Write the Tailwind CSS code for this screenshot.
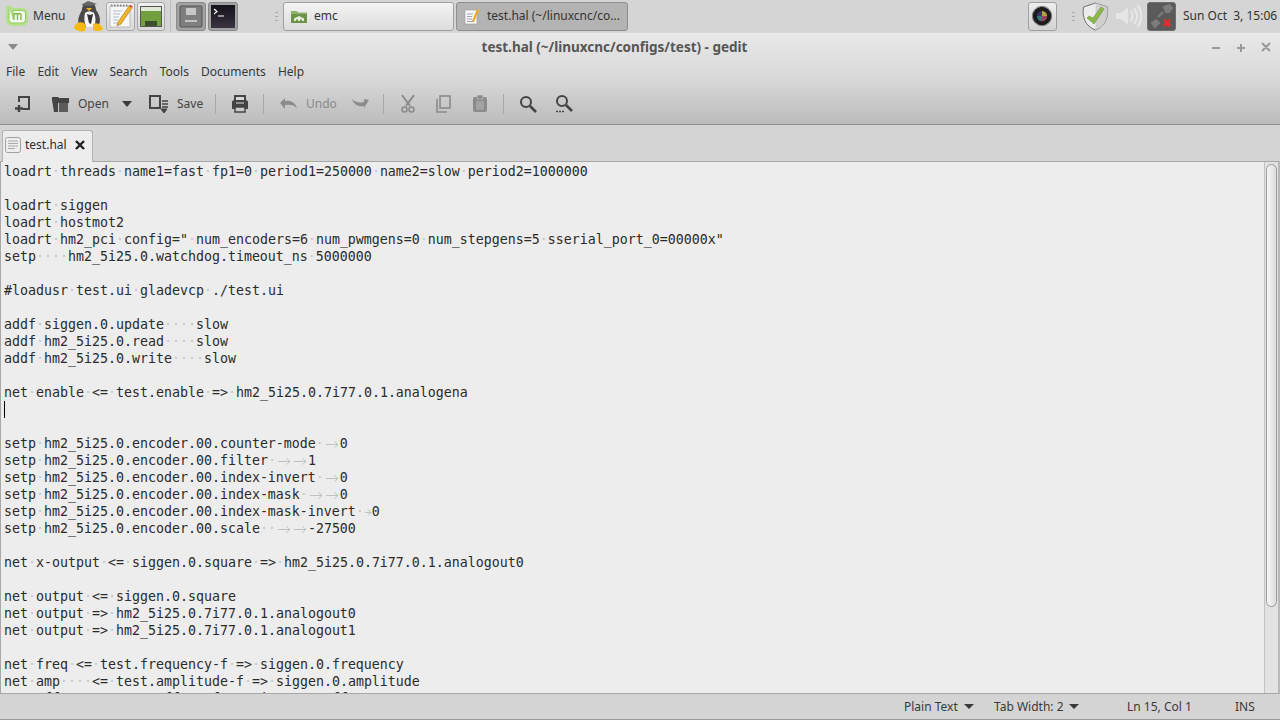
<!DOCTYPE html>
<html lang="en">
<head>
<meta charset="UTF-8">
<title>test.hal - gedit</title>
<script src="https://cdn.jsdelivr.net/npm/@tailwindcss/browser@4"></script>
</head>
<body class="w-[1280px] h-[720px] overflow-hidden bg-[#d4d4d4] font-['Noto_Sans',sans-serif] text-[12px] text-[#3a3a3a]">
<div class="flex flex-col h-[720px]">

  <!-- panel -->
  <div class="h-[34px] shrink-0 flex items-center bg-[#d5d5d5] border-b border-[#ececec] pb-px">
    <svg class="ml-[6px] w-[22px] h-[22px]" viewBox="0 0 22 22">
      <path d="M0 1h6v2h10c3 0 6 2 6 6v6c0 4-3 6-6 6H7c-4 0-7-3-7-7z" fill="#b4e08c"/>
      <path d="M3 3.500v11c0 2 2 3.500 4 3.500h9c2 0 3.500-1.500 3.500-3.500V9c0-2-1.500-3.500-3.500-3.500H7V14" fill="#f3f8ec" stroke="#93cd5e" stroke-width="1"/>
      <path d="M8 8v7M11.500 15V9.500M15 15V9.500M8 10c1-2 3-2 3.500 0 .5-2 3.500-2 3.500 0" fill="none" stroke="#7fb64a" stroke-width="1.300"/>
    </svg>
    <span class="ml-[5px] w-[41px] text-[#333]">Menu</span>
    <svg class="w-[30px] h-[32px]" viewBox="0 0 30 32">
      <path d="M6 27C2 20 6 14 8 10c0-5 3-8 7-8s7 3 7 8c3 4 6 10 2 17z" fill="#4a4a4a"/>
      <path d="M11 13c2-2 7-2 9 0 2 4 2 9 0 14h-8c-2-5-2-10-1-14z" fill="#f4f4f4"/>
      <path d="M13 14l3 1 3-1-2 10-2-1z" fill="#333"/>
      <path d="M7 5l7-4 9 3-7 2z" fill="#666"/>
      <path d="M12 8l6 0-3 3z" fill="#f2b01e"/>
      <path d="M0 28c1-5 6-7 10-5 2 2 2 5 1 8-3 1-9 0-11-3zM19 24c4-2 8 0 10 5-1 2-7 3-10 1z" fill="#f6b90f"/>
    </svg>
    <div class="ml-[2px] w-[29px] h-[29px] rounded-[3px] border border-[#a8a8a8] bg-gradient-to-b from-[#f2f2f2] to-[#d8d8d8] flex items-center justify-center">
      <svg class="w-[26px] h-[27px]" viewBox="0 0 26 27">
        <rect x="2" y="3" width="20" height="21" fill="#f8f8f8" stroke="#bbb"/>
        <path d="M3 2.500h18" stroke="#888" stroke-dasharray="1.500 1.500" stroke-width="2"/>
        <path d="M5 8h9M5 11h7M5 14h6M5 17h5M5 20h8" stroke="#b0bccb"/>
        <path d="M9 23l1-4L21 3l3 2-11 16z" fill="#f0b429" stroke="#a8741a" stroke-width=".6"/>
        <path d="M21 3l1-1.500 3 2-1 1.500z" fill="#d9534f"/>
      </svg>
    </div>
    <div class="ml-[2px] w-[28px] h-[29px] rounded-[3px] border border-[#a8a8a8] bg-gradient-to-b from-[#f0f0f0] to-[#d8d8d8] flex items-center justify-center">
      <svg class="w-[22px] h-[21px]" viewBox="0 0 22 21">
        <rect x=".5" y=".5" width="21" height="20" fill="#6f9a48" stroke="#555"/>
        <rect x="1" y="1" width="20" height="4" fill="#dfe8d4"/>
        <rect x="1" y="5" width="20" height="15" fill="#72a03f"/>
        <rect x="5" y="15" width="12" height="5" fill="#3c4f2c"/>
      </svg>
    </div>
    <div class="ml-[5px] w-px h-[30px] bg-[#bdbdbd]"></div>
    <div class="ml-[5px] w-[30px] h-[29px] rounded-[3px] border border-[#8a8a8a] bg-[#a2a2a2] flex items-center justify-center">
      <svg class="w-[24px] h-[23px]" viewBox="0 0 24 23">
        <rect x="1" y="1" width="22" height="21" rx="1" fill="#7f7f7f" stroke="#555"/>
        <rect x="7" y="3" width="10" height="7" fill="#c8c8c8"/>
        <rect x="6" y="15" width="12" height="2" fill="#c4c4c4"/>
      </svg>
    </div>
    <div class="ml-[2px] w-[30px] h-[29px] rounded-[3px] border border-[#8a8a8a] bg-[#a2a2a2] flex items-center justify-center">
      <div class="w-[24px] h-[23px] bg-gradient-to-b from-[#15121a] to-[#3a3540] flex items-start">
        <svg class="w-[12px] h-[10px] mt-[3px] ml-[2px]" viewBox="0 0 12 10"><path d="M1 1l3 2.500-3 2.500M5 8h6" fill="none" stroke="#fff" stroke-width="1.200"/></svg>
      </div>
    </div>
    <div class="ml-[37px] w-[3px] h-[9px] border-y border-[#aaa] bg-[linear-gradient(#aaa,#aaa)] bg-[length:100%_1px] bg-center bg-no-repeat"></div>
    <div class="ml-[5px] w-[171px] h-[29px] rounded-[3px] border border-[#a0a0a0] bg-gradient-to-b from-[#f4f4f4] to-[#dcdcdc] flex items-center pl-[7px] text-[#333]">
      <svg class="w-[16px] h-[14px]" viewBox="0 0 16 14">
        <path d="M0 2h6l1 1.500h9V14H0z" fill="#8fb26b"/>
        <rect y="5" width="16" height="9" fill="#6d944a"/>
        <path d="M3 12V9.500L8 7l5 2.500V12h-2v-1.500H9V12H7v-1.500H5V12z" fill="#e6efdb"/>
      </svg>
      <span class="ml-[7px]">emc</span>
    </div>
    <div class="ml-[2px] w-[172px] h-[29px] rounded-[3px] border border-[#8e8e8e] bg-[#b3b3b3] flex items-center pl-[7px] text-[#333]">
      <svg class="w-[16px] h-[17px]" viewBox="0 0 16 17">
        <rect x="1" y="2" width="12" height="14" fill="#f7f7f7" stroke="#999" stroke-width=".6"/>
        <path d="M3 6h6M3 8.500h5M3 11h5M3 13.500h7" stroke="#98a6b8"/>
        <path d="M8 13l5-12 2 1-5 12z" fill="#eeaa22"/>
      </svg>
      <span class="ml-[7px]">test.hal (~/linuxcnc/co...</span>
    </div>
    <svg class="ml-[400px] w-[29px] h-[29px] rounded-[3px] border border-[#a0a0a0] bg-gradient-to-b from-[#eeeeee] to-[#d2d2d2]" viewBox="0 0 29 29">
      <circle cx="14" cy="14" r="10" fill="#1c1c1c"/>
      <circle cx="14" cy="14" r="10.500" fill="none" stroke="#777"/>
      <circle cx="14" cy="14" r="5.500" fill="#3c3470"/>
      <path d="M14 8.500a5.500 5.500 0 0 1 5.500 5.500H14z" fill="#b8a034"/>
      <path d="M14 14h5.500a5.500 5.500 0 0 1-5.500 5.500z" fill="#a83c5c"/>
      <path d="M14 14v5.500A5.500 5.500 0 0 1 8.500 14z" fill="#2f7d7a"/>
    </svg>
    <div class="ml-[15px] w-[3px] h-[9px] border-y border-[#aaa] bg-[linear-gradient(#aaa,#aaa)] bg-[length:100%_1px] bg-center bg-no-repeat"></div>
    <svg class="ml-[7px] w-[27px] h-[29px]" viewBox="0 0 27 29">
      <path d="M13.500 1l12 4c1 10-2 19-12 23C3 24 0 15 1.500 5z" fill="#ececec" stroke="#6f6f6f"/>
      <path d="M13.500 1l12 4c1 10-2 19-12 23z" fill="#cfcfcf"/>
      <path d="M7 14l4 2 8-11 3 2-10 15-7-6z" fill="#8db84a" stroke="#66862f" stroke-width=".5"/>
    </svg>
    <svg class="ml-[6px] w-[27px] h-[24px]" viewBox="0 0 27 24">
      <path d="M1 9h5l7-6v18l-7-6H1z" fill="#e6e6e6"/>
      <path d="M16 7c2 3 2 7 0 10M19 4c4 5 4 11 0 16M22.500 1c5 7 5 15 0 22" fill="none" stroke="#e6e6e6" stroke-width="2.200"/>
    </svg>
    <div class="ml-[5px] w-[29px] h-[29px] rounded-[3px] bg-[#5a5a5a] border border-[#6e6e6e] flex items-center justify-center">
      <svg class="w-[25px] h-[25px]" viewBox="0 0 25 25">
        <path d="M3 19l4-3 3 3-4 4zM9 13l5-5M15 3l5-2 3 3-3 4-3 0z" stroke="#7d7d7d" stroke-width="2" fill="#7d7d7d"/>
        <path d="M14 16l2-1 2 2 2-2 2 1-2 2.500 2 2.500-2 2-2-2-2 2-2-2 2-2.500z" fill="#e32c2c"/>
      </svg>
    </div>
    <span class="ml-[7px] whitespace-pre text-[#333]">Sun Oct  3, 15:06</span>
  </div>

  <!-- gradient header: title, menu, toolbar -->
  <div class="h-[91px] shrink-0 flex flex-col bg-gradient-to-b from-[#e8e8e8] via-[#d8d8d8] to-[#bcbcbc] border-b border-[#8e8e8e]">
    <div class="h-[26px] shrink-0 relative flex items-center justify-center pr-[51px] font-bold text-[13.500px] text-[#565656]">
      <svg class="absolute left-[8px] top-[10px] w-[10px] h-[6px]" viewBox="0 0 10 6"><path d="M0 0h10L5 6z" fill="#8a8a8a"/></svg>
      test.hal (~/linuxcnc/configs/test) - gedit
      <svg class="absolute left-[1211px] top-[8px] w-[60px] h-[11px]" viewBox="0 0 60 11" fill="none" stroke="#999" stroke-width="2">
        <path d="M1 6h8M26 6h8M30 2v8M51 1l8 8M59 1l-8 8"/>
      </svg>
    </div>
    <div class="h-[23px] shrink-0 flex items-center pl-[6px] gap-[12.200px] text-[#383838]">
      <span>File</span><span>Edit</span><span>View</span><span>Search</span><span>Tools</span><span>Documents</span><span>Help</span>
    </div>
    <div class="flex-1 flex items-center text-[#444]">
      <svg class="ml-[14px] w-[18px] h-[18px]" viewBox="0 0 18 18" fill="none" stroke="#444" stroke-width="2">
        <path d="M5 7V2h10v12H9"/><path d="M5 10v7M1 13.500h8" stroke-width="2.400"/>
      </svg>
      <svg class="ml-[19px] w-[19px] h-[18px]" viewBox="0 0 19 18">
        <path d="M1 2h6l1 1h10v3H1z" fill="#444"/><path d="M1 5h17v3H7v9H3z" fill="#444"/><rect x="8" y="8" width="9" height="9" fill="#5b5b5b"/>
      </svg>
      <span class="ml-[8px] w-[44px]">Open</span>
      <svg class="w-[10px] h-[6px]" viewBox="0 0 10 6"><path d="M0 0h10L5 6z" fill="#3c3c3c"/></svg>
      <svg class="ml-[17px] w-[20px] h-[18px]" viewBox="0 0 20 18" fill="none" stroke="#444">
        <rect x="1" y="1" width="10" height="12" stroke-width="2"/><path d="M13 6h6M13 9h6M13 12h6" stroke-width="1.500"/><path d="M12 14h6l-3 4z" fill="#444"/>
      </svg>
      <span class="ml-[8px] w-[38px]">Save</span>
      <div class="w-px h-[20px] bg-[#a8a8a8]"></div>
      <svg class="ml-[15px] w-[18px] h-[18px]" viewBox="0 0 18 18">
        <rect x="4" y="1" width="10" height="5" fill="#d8d8d8" stroke="#444" stroke-width="2"/><path d="M1 7c0-1 1-2 2-2h12c1 0 2 1 2 2v7H1z" fill="#444"/><rect x="4" y="12" width="10" height="5" fill="#ccc" stroke="#444" stroke-width="1.500"/><path d="M5 8h8" stroke="#ddd"/>
      </svg>
      <div class="ml-[14px] w-px h-[20px] bg-[#a8a8a8]"></div>
      <svg class="ml-[16px] w-[17px] h-[11px]" viewBox="0 0 17 11"><path d="M0 5l5-5v3c5-1 10 1 12 7-3-3-7-4-12-3v4z" fill="#8c8c8c"/></svg>
      <span class="ml-[9px] w-[46px] text-[#8a8a8a]">Undo</span>
      <svg class="w-[17px] h-[11px]" viewBox="0 0 17 11"><path d="M17 2l-5 8V8C7 9 2 7 0 1c3 3 7 4 12 3V1z" fill="#8c8c8c"/></svg>
      <div class="ml-[14px] w-px h-[20px] bg-[#a8a8a8]"></div>
      <svg class="ml-[17px] w-[14px] h-[18px]" viewBox="0 0 14 18" fill="none" stroke="#8a8a8a">
        <path d="M1 0l8 11M13 0L5 11" stroke-width="2"/><circle cx="3.500" cy="14.500" r="2.500" stroke-width="1.600"/><circle cx="10.500" cy="14.500" r="2.500" stroke-width="1.600"/>
      </svg>
      <svg class="ml-[20px] w-[16px] h-[18px]" viewBox="0 0 16 18" fill="none" stroke="#8a8a8a" stroke-width="1.600">
        <rect x="5" y="1" width="10" height="12"/><path d="M2 4v13h10"/>
      </svg>
      <svg class="ml-[21px] w-[16px] h-[19px]" viewBox="0 0 16 19"><rect x="1" y="3" width="14" height="15" rx="2" fill="#8a8a8a"/><rect x="5" y="1" width="6" height="4" rx="1" fill="#8a8a8a" stroke="#d0d0d0" stroke-width=".6"/><rect x="4" y="7" width="8" height="9" fill="#a2a2a2"/></svg>
      <div class="ml-[15px] w-px h-[20px] bg-[#a8a8a8]"></div>
      <svg class="ml-[15px] w-[18px] h-[18px]" viewBox="0 0 18 18" fill="none" stroke="#444">
        <circle cx="7" cy="7" r="5" stroke-width="2"/><path d="M11 11l6 6" stroke-width="2.600"/>
      </svg>
      <svg class="ml-[18px] w-[18px] h-[19px]" viewBox="0 0 18 19" fill="none" stroke="#444">
        <circle cx="7" cy="7" r="5" stroke-width="2"/><path d="M11 11l6 6" stroke-width="2.600"/><path d="M1 17.500h9" stroke-width="1.500" stroke-dasharray="2 1"/>
      </svg>
    </div>
  </div>

  <!-- tab strip -->
  <div class="h-[36px] shrink-0 flex items-end pl-[2px] bg-[#d4d4d4]">
    <div class="w-[91px] h-[32px] -mb-px rounded-t-[3px] border border-b-0 border-[#b4b4b4] bg-[#ededed] flex items-center pl-[2px] pb-[4px] text-[#2e2e2e] relative z-10">
      <svg class="w-[16px] h-[16px]" viewBox="0 0 16 16" fill="none">
        <rect x=".5" y=".5" width="15" height="15" rx="2" fill="#eeeeee" stroke="#a0a0a0"/><path d="M3 4h10M3 6.500h10M3 9h10M3 11.500h7" stroke="#a8a8a8"/>
      </svg>
      <span class="ml-[4px] w-[50px]">test.hal</span>
      <svg class="w-[10px] h-[10px]" viewBox="0 0 10 10"><path d="M1 1l8 8M9 1l-8 8" stroke="#222" stroke-width="2.400"/></svg>
    </div>
  </div>

  <!-- editor -->
  <div class="flex-1 min-h-0 flex border-y border-l border-r-2 border-[#a8a8a8] border-r-[#b8b8b8] bg-[#ededed] overflow-hidden">
    <div class="flex-1 pl-[3px] pt-px [&_div]:whitespace-pre font-['DejaVu_Sans_Mono',monospace] text-[13.29px] leading-[17px] text-[#2b2b2b] [&_i]:not-italic [&_i]:text-[#c6c6c6] [&_svg]:inline-block [&_svg]:h-[10px] [&_svg]:align-baseline [&_svg]:fill-none [&_svg]:stroke-[#c0c0c0]">
      <div class="h-[17px]">loadrt<i>·</i>threads<i>·</i>name1=fast<i>·</i>fp1=0<i>·</i>period1=250000<i>·</i>name2=slow<i>·</i>period2=1000000</div>
      <div class="h-[17px]"></div>
      <div class="h-[17px]">loadrt<i>·</i>siggen</div>
      <div class="h-[17px]">loadrt<i>·</i>hostmot2</div>
      <div class="h-[17px]">loadrt<i>·</i>hm2_pci<i>·</i>config="<i>·</i>num_encoders=6<i>·</i>num_pwmgens=0<i>·</i>num_stepgens=5<i>·</i>sserial_port_0=00000x"</div>
      <div class="h-[17px]">setp<i>····</i>hm2_5i25.0.watchdog.timeout_ns<i>·</i>5000000</div>
      <div class="h-[17px]"></div>
      <div class="h-[17px]">#loadusr<i>·</i>test.ui<i>·</i>gladevcp<i>·</i>./test.ui</div>
      <div class="h-[17px]"></div>
      <div class="h-[17px]">addf<i>·</i>siggen.0.update<i>····</i>slow</div>
      <div class="h-[17px]">addf<i>·</i>hm2_5i25.0.read<i>····</i>slow</div>
      <div class="h-[17px]">addf<i>·</i>hm2_5i25.0.write<i>····</i>slow</div>
      <div class="h-[17px]"></div>
      <div class="h-[17px]">net<i>·</i>enable<i>·</i>&lt;=<i>·</i>test.enable<i>·</i>=&gt;<i>·</i>hm2_5i25.0.7i77.0.1.analogena</div>
      <div class="h-[17px] relative"><span class="absolute left-0 top-0 w-px h-[17px] bg-black"></span></div>
      <div class="h-[17px]"></div>
      <div class="h-[17px]">setp<i>·</i>hm2_5i25.0.encoder.00.counter-mode<i>·</i><svg class="w-4" viewBox="0 0 16 10"><path d="M2 6.500h12M10.500 3.500l3.500 3-3.500 3"/></svg>0</div>
      <div class="h-[17px]">setp<i>·</i>hm2_5i25.0.encoder.00.filter<i>·</i><svg class="w-4" viewBox="0 0 16 10"><path d="M2 6.500h12M10.500 3.500l3.500 3-3.500 3"/></svg><svg class="w-4" viewBox="0 0 16 10"><path d="M2 6.500h12M10.500 3.500l3.500 3-3.500 3"/></svg>1</div>
      <div class="h-[17px]">setp<i>·</i>hm2_5i25.0.encoder.00.index-invert<i>·</i><svg class="w-4" viewBox="0 0 16 10"><path d="M2 6.500h12M10.500 3.500l3.500 3-3.500 3"/></svg>0</div>
      <div class="h-[17px]">setp<i>·</i>hm2_5i25.0.encoder.00.index-mask<i>·</i><svg class="w-4" viewBox="0 0 16 10"><path d="M2 6.500h12M10.500 3.500l3.500 3-3.500 3"/></svg><svg class="w-4" viewBox="0 0 16 10"><path d="M2 6.500h12M10.500 3.500l3.500 3-3.500 3"/></svg>0</div>
      <div class="h-[17px]">setp<i>·</i>hm2_5i25.0.encoder.00.index-mask-invert<i>·</i><svg class="w-2" viewBox="0 0 8 10"><path d="M1 6.500h6M4 3.500l3 3-3 3"/></svg>0</div>
      <div class="h-[17px]">setp<i>·</i>hm2_5i25.0.encoder.00.scale<i>··</i><svg class="w-4" viewBox="0 0 16 10"><path d="M2 6.500h12M10.500 3.500l3.500 3-3.500 3"/></svg><svg class="w-4" viewBox="0 0 16 10"><path d="M2 6.500h12M10.500 3.500l3.500 3-3.500 3"/></svg>-27500</div>
      <div class="h-[17px]"></div>
      <div class="h-[17px]">net<i>·</i>x-output<i>·</i>&lt;=<i>·</i>siggen.0.square<i>·</i>=&gt;<i>·</i>hm2_5i25.0.7i77.0.1.analogout0</div>
      <div class="h-[17px]"></div>
      <div class="h-[17px]">net<i>·</i>output<i>·</i>&lt;=<i>·</i>siggen.0.square</div>
      <div class="h-[17px]">net<i>·</i>output<i>·</i>=&gt;<i>·</i>hm2_5i25.0.7i77.0.1.analogout0</div>
      <div class="h-[17px]">net<i>·</i>output<i>·</i>=&gt;<i>·</i>hm2_5i25.0.7i77.0.1.analogout1</div>
      <div class="h-[17px]"></div>
      <div class="h-[17px]">net<i>·</i>freq<i>·</i>&lt;=<i>·</i>test.frequency-f<i>·</i>=&gt;<i>·</i>siggen.0.frequency</div>
      <div class="h-[17px]">net<i>·</i>amp<i>····</i>&lt;=<i>·</i>test.amplitude-f<i>·</i>=&gt;<i>·</i>siggen.0.amplitude</div>
      <div class="h-[17px]">net<i>·</i>offset<i>·</i>&lt;=<i>·</i>test.offset-f<i>·</i>=&gt;<i>·</i>siggen.0.offset</div>
    </div>
    <!-- scrollbar -->
    <div class="w-[14px] shrink-0 border-l border-[#c4c4c4] bg-[#e2e2e2] pt-[2px] pl-px">
      <div class="w-[11px] h-[443px] rounded-full border border-[#9a9a9a] bg-gradient-to-r from-[#f6f6f6] to-[#dcdcdc]"></div>
    </div>
  </div>

  <!-- status bar -->
  <div class="h-[26px] shrink-0 flex items-center border-b border-[#9a9a9a] bg-[#d4d4d4] text-[#3a3a3a]">
    <span class="ml-[904px] w-[60px]">Plain Text</span>
    <svg class="w-[10px] h-[5px]" viewBox="0 0 10 5"><path d="M0 0h10L5 5z" fill="#3a3a3a"/></svg>
    <span class="ml-[20px] w-[75px]">Tab Width: 2</span>
    <svg class="w-[10px] h-[5px]" viewBox="0 0 10 5"><path d="M0 0h10L5 5z" fill="#3a3a3a"/></svg>
    <span class="ml-[48px] w-[108px]">Ln 15, Col 1</span>
    <span>INS</span>
  </div>
</div>
</body>
</html>
